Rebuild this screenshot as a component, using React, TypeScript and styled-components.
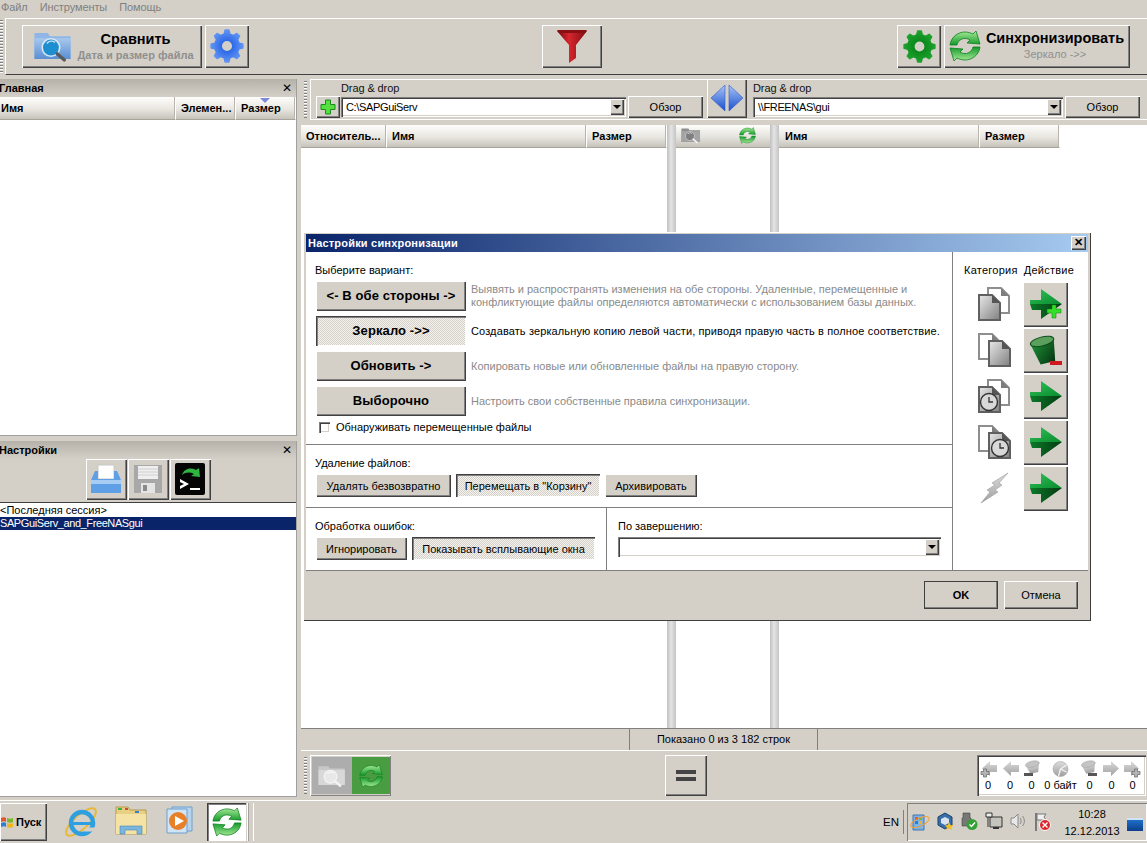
import React from "react"
import styled, { createGlobalStyle, css } from "styled-components"

const GlobalStyle = createGlobalStyle`
    html, body {
        margin: 0;
        padding: 0;
        overflow: hidden;
        background: #d4d0c8;
    }
    body {
        font-family: "Liberation Sans", Arial, sans-serif;
        font-size: 11px;
        color: #000;
    }
    * { box-sizing: border-box; }
`

const raised = css`
    background-color: #d4d0c8;
    box-shadow: inset 1px 1px 0 #fff, inset -1px -1px 0 #404040, inset -2px -2px 0 #808080;
`
const pressed = css`
    background: repeating-conic-gradient(#f4f3f0 0 25%, #d4d0c8 0 50%) 0 0 / 2px 2px;
    box-shadow: inset 1px 1px 0 #404040, inset 2px 2px 0 #808080, inset -1px -1px 0 #fff;
`
const sunken = css`
    background: #fff;
    box-shadow: inset 1px 1px 0 #808080, inset 2px 2px 0 #404040, inset -1px -1px 0 #fff, inset -2px -2px 0 #d4d0c8;
`

/* ---------- icons ---------- */

function gearPath(teeth: number, outer: number, inner: number, hole: number) {
    const c = 16
    const pts: string[] = []
    const step = (Math.PI * 2) / teeth
    for (let i = 0; i < teeth; i++) {
        const a = i * step - Math.PI / 2
        const corners: [number, number][] = [
            [a - step * 0.3, inner],
            [a - step * 0.15, outer],
            [a + step * 0.15, outer],
            [a + step * 0.3, inner],
        ]
        corners.forEach(([t, r]) => {
            pts.push(`${(c + Math.cos(t) * r).toFixed(2)} ${(c + Math.sin(t) * r).toFixed(2)}`)
        })
    }
    const ring = `M${c - hole} ${c}a${hole} ${hole} 0 1 0 ${hole * 2} 0a${hole} ${hole} 0 1 0 ${-hole * 2} 0Z`
    return `M${pts.join("L")}Z${ring}`
}

function Defs() {
    return (
        <HiddenSvg aria-hidden="true">
            <defs>
                <radialGradient id="gBlue" cx="0.5" cy="0.5" r="0.6">
                    <stop offset="0.3" stopColor="#2f6be8" />
                    <stop offset="1" stopColor="#6f9ff5" />
                </radialGradient>
                <radialGradient id="gGreen" cx="0.5" cy="0.5" r="0.6">
                    <stop offset="0.3" stopColor="#0b8a1c" />
                    <stop offset="1" stopColor="#23a832" />
                </radialGradient>
                <linearGradient id="gSync" x1="0" y1="0" x2="0" y2="1">
                    <stop offset="0" stopColor="#a8eb98" />
                    <stop offset="1" stopColor="#12992a" />
                </linearGradient>
                <linearGradient id="gArrowTop" x1="0" y1="0" x2="1" y2="1">
                    <stop offset="0" stopColor="#30c458" />
                    <stop offset="1" stopColor="#0a8a2e" />
                </linearGradient>
                <linearGradient id="gArrowLow" x1="0" y1="0" x2="1" y2="0">
                    <stop offset="0" stopColor="#0b7a28" />
                    <stop offset="1" stopColor="#053a12" />
                </linearGradient>
                <linearGradient id="gTrash" x1="0" y1="0" x2="1" y2="1">
                    <stop offset="0" stopColor="#1e9038" />
                    <stop offset="1" stopColor="#04300e" />
                </linearGradient>
                <linearGradient id="gRed" x1="0" y1="0" x2="1" y2="0">
                    <stop offset="0" stopColor="#6e0a0e" />
                    <stop offset="0.4" stopColor="#d8262e" />
                    <stop offset="1" stopColor="#7e0e12" />
                </linearGradient>
                <linearGradient id="gFolder" x1="0" y1="0" x2="0" y2="1">
                    <stop offset="0" stopColor="#a8c8ee" />
                    <stop offset="1" stopColor="#5a8fd2" />
                </linearGradient>
                <linearGradient id="gDoc" x1="0" y1="0" x2="1" y2="1">
                    <stop offset="0" stopColor="#e8e8e8" />
                    <stop offset="1" stopColor="#808080" />
                </linearGradient>
                <linearGradient id="gGrey" x1="0" y1="0" x2="0" y2="1">
                    <stop offset="0" stopColor="#dcdcdc" />
                    <stop offset="1" stopColor="#a0a0a0" />
                </linearGradient>
                <linearGradient id="gSwap" x1="0" y1="0" x2="0" y2="1">
                    <stop offset="0" stopColor="#a8c4f4" />
                    <stop offset="1" stopColor="#1a4fd0" />
                </linearGradient>
            </defs>
        </HiddenSvg>
    )
}

function Gear({ fill, size }: { fill: string; size: number }) {
    return (
        <svg width={size} height={size} viewBox="0 0 32 32">
            <path d={gearPath(8, 15, 11.5, 5.5)} fill={fill} stroke={fill} strokeWidth="1.500" strokeLinejoin="round" fillRule="evenodd" />
        </svg>
    )
}

function FolderSearch({ muted, dark }: { muted?: boolean; dark?: boolean }) {
    const body = dark ? "#a4a4a4" : muted ? "#d8d8d8" : "url(#gFolder)"
    const back = dark ? "#8e8e8e" : muted ? "#c8c8c8" : "#8fb6e6"
    const lens = dark ? "#7e7e7e" : muted ? "#e8e8e8" : "#1d8fd0"
    const rim = dark ? "#c8c8c8" : muted ? "#f4f4f4" : "#d8e8f4"
    return (
        <svg width="40" height="33" viewBox="0 0 38 32">
            <path d="M1 3h13l2 3h20v22H1z" fill={back} />
            <path d="M1 8h35v20H1z" fill={body} />
            <circle cx="17" cy="17" r="8.500" fill={lens} stroke={rim} strokeWidth="1.600" />
            <path d="M13 13a6 6 0 0 1 8-1" stroke="#fff" strokeOpacity=".7" strokeWidth="1.500" fill="none" />
            <path d="M23 23l7 6" stroke={muted || dark ? "#f2f2f2" : "#5a5a5a"} strokeWidth="3.200" strokeLinecap="round" />
        </svg>
    )
}

function Funnel() {
    return (
        <svg width="32" height="36" viewBox="0 0 32 36">
            <path d="M1 3h30L20 17v13l-7 5V17z" fill="url(#gRed)" />
            <path d="M1 2h30l-2 3H3z" fill="#8a0f14" />
        </svg>
    )
}

function SyncArrows({ size }: { size: number }) {
    const half = "M1 15C2 7 9 2 16 2c3 0 6 1 8 2l3-3 4 13-13-1 3-3c-2-1-3-1.500-5-1.500C12 8.500 9 11 8 15z"
    return (
        <svg width={size} height={size} viewBox="0 0 32 32">
            <path d={half} fill="url(#gSync)" stroke="#0d7f1e" strokeWidth=".8" />
            <path d={half} fill="url(#gSync)" stroke="#0d7f1e" strokeWidth=".8" transform="rotate(180 16 16)" />
        </svg>
    )
}

function PlusIcon() {
    return (
        <svg width="16" height="16" viewBox="0 0 16 16">
            <path d="M5.500 1h5v4.500H15v5h-4.500V15h-5v-4.500H1v-5h4.500z" fill="#55e040" stroke="#1b8a1e" strokeWidth="1" />
        </svg>
    )
}

function SwapIcon() {
    return (
        <svg width="34" height="28" viewBox="0 0 34 28">
            <path d="M15 1v26L1 14z" fill="url(#gSwap)" stroke="#2e58c0" strokeWidth=".6" />
            <path d="M19 1v26l14-13z" fill="url(#gSwap)" stroke="#2e58c0" strokeWidth=".6" />
        </svg>
    )
}

function ActionArrow({ plus }: { plus?: boolean }) {
    return (
        <svg width="34" height="32" viewBox="0 0 34 32">
            <path d="M1 12h11V1l21 15H1z" fill="url(#gArrowTop)" />
            <path d="M1 16h32L12 31V22H3z" fill="url(#gArrowLow)" />
            {plus && <path d="M23 17h4v4h5v4h-5v5h-4v-5h-5v-4h5z" fill="#33e028" stroke="#0f7a12" strokeWidth=".5" />}
        </svg>
    )
}

function TrashAction() {
    return (
        <svg width="34" height="34" viewBox="0 0 34 34">
            <g transform="rotate(-14 16 16)">
                <path d="M3 8h24l-4 22H8z" fill="url(#gTrash)" />
                <ellipse cx="15" cy="8" rx="12" ry="4.500" fill="#5aa05c" stroke="#0d4d18" strokeWidth="1" />
            </g>
            <path d="M21 28h12v4H21z" fill="#d01820" />
        </svg>
    )
}

function Doc({ x, y, solid }: { x: number; y: number; solid?: boolean }) {
    const d = `M${x} ${y}h13l8 8v17h-21z`
    return (
        <g>
            <path d={d} fill={solid ? "url(#gDoc)" : "#fff"} stroke={solid ? "#606060" : "#8e8e8e"} strokeWidth="2" />
            <path d={`M${x + 13} ${y}l8 8h-8z`} fill={solid ? "#555" : "#7e7e7e"} />
        </g>
    )
}

function CategoryDocs({ front, clock }: { front: "left" | "right"; clock?: boolean }) {
    const left = front === "left"
    return (
        <svg width="33" height="34" viewBox="0 0 33 34">
            {left ? (
                <>
                    <Doc x={10} y={1} />
                    <Doc x={1} y={8} solid />
                </>
            ) : (
                <>
                    <Doc x={1} y={1} />
                    <Doc x={11} y={8} solid />
                </>
            )}
            {clock && (
                <g transform={left ? "translate(11 23)" : "translate(22 23)"}>
                    <circle r="8.500" fill="#d8d8d8" stroke="#333" strokeWidth="1.400" />
                    <path d="M0-5v5h4" fill="none" stroke="#333" strokeWidth="1.300" />
                </g>
            )}
        </svg>
    )
}

function Lightning() {
    return (
        <svg width="30" height="32" viewBox="0 0 30 32">
            <path d="M28 1L12 11l3 2-8 5 3 2L1 31l17-11-3-2 7-5-3-2z" fill="url(#gGrey)" stroke="#9a9a9a" strokeWidth=".6" />
        </svg>
    )
}

function OpenConfig() {
    return (
        <svg width="32" height="32" viewBox="0 0 32 32">
            <path d="M8 2h16v14H8z" fill="#fff" stroke="#c8c8c8" />
            <path d="M5 8h3v8h16V8h3l4 9v13H1V17z" fill="#5f9fe6" />
            <path d="M1 17h30v4H1z" fill="#a8cdf4" />
        </svg>
    )
}

function SaveConfig() {
    return (
        <svg width="30" height="30" viewBox="0 0 30 30">
            <path d="M1 1h28v28H1z" fill="#a8a8a8" />
            <path d="M5 2h20v13H5z" fill="#efefef" />
            <path d="M5 5h20M5 8h20M5 11h20" stroke="#cfcfcf" />
            <path d="M8 19h14v10H8z" fill="#e4e4e4" />
            <path d="M10 21h4v6h-4z" fill="#8a8a8a" />
        </svg>
    )
}

function ConsoleIcon() {
    return (
        <svg width="32" height="34" viewBox="0 0 32 34">
            <rect x="1" y="1" width="30" height="32" rx="2" fill="#050505" />
            <path d="M8 13c2-6 8-8 14-5l3-2 1 9-9-1 3-2c-4-2-8-2-12 1z" fill="#2fb53f" />
            <path d="M6 17l9 5-9 5v-3l4-2-4-2zM16 26h10v2H16z" fill="#fff" />
        </svg>
    )
}

function WinFlag() {
    return (
        <svg width="14" height="13" viewBox="0 0 14 13">
            <path d="M1 2c2-1 4-1 5 0v4C5 5 3 5 1 6z" fill="#e2542c" />
            <path d="M7 2c2 1 4 1 6 0v4c-2 1-4 1-6 0z" fill="#7cb82e" />
            <path d="M1 7c2-1 4-1 5 0v4c-1-1-3-1-5 0z" fill="#2d7fd6" />
            <path d="M7 7c2 1 4 1 6 0v4c-2 1-4 1-6 0z" fill="#f0b41e" />
        </svg>
    )
}

function IeLogo() {
    return (
        <svg width="34" height="34" viewBox="0 0 34 34">
            <ellipse cx="17" cy="17" rx="19" ry="7" fill="none" stroke="#e8b83a" strokeWidth="2" transform="rotate(-42 17 17)" />
            <circle cx="18" cy="18" r="11" fill="none" stroke="#2f9fe0" strokeWidth="4.500" />
            <path d="M8 17h20v3H8z" fill="#2f9fe0" />
            <path d="M21 22.500h10v4H21z" fill="#d4d0c8" />
        </svg>
    )
}

function ExplorerIcon() {
    return (
        <svg width="32" height="30" viewBox="0 0 32 30">
            <path d="M1 2h12l2 3h16v24H1z" fill="#e8cf82" stroke="#b89a4a" />
            <path d="M3 3h4v2H3z" fill="#3cae4a" />
            <path d="M10 3h3v2h-3z" fill="#d8483a" />
            <path d="M20 6h4v2h-4z" fill="#3a80d0" />
            <path d="M1 9h30v20H1z" fill="#f4e3a4" />
            <path d="M5 29v-8h22v8h-5v-4H10v4z" fill="#7ab6de" stroke="#4a86ba" strokeWidth=".6" />
        </svg>
    )
}

function MediaIcon() {
    return (
        <svg width="30" height="30" viewBox="0 0 30 30">
            <path d="M6 2h20v24H6z" fill="#b6d4ee" stroke="#6f9fce" />
            <path d="M1 4h20v24H1z" fill="#d0e4f6" stroke="#6f9fce" />
            <circle cx="12" cy="16" r="9" fill="#e8802a" />
            <path d="M9 11l9 5-9 5z" fill="#fff" />
        </svg>
    )
}

const plusMark = (x: number, y: number) => (
    <path d={`M${x + 2.500} ${y}h3v2.500H${x + 8}v3h-2.500V${y + 8}h-3v-2.500H${x}v-3h2.500z`} fill="#b4b4b4" stroke="#666" strokeWidth=".7" />
)
const cylinder = (cx: number, barX: number) => (
    <g>
        <g transform={`rotate(-12 ${cx} 7)`}>
            <path d={`M${cx - 7} 4l3 9h8l3-9z`} fill="url(#gGrey)" />
            <ellipse cx={cx} cy="4" rx="7" ry="3" fill="#c4c4c4" stroke="#a0a0a0" strokeWidth=".5" />
        </g>
        <path d={`M${barX} 13h9v3h-9z`} fill="#555" />
    </g>
)

const statIcons: Record<string, React.ReactElement> = {
    addLeft: <g><path d="M17 5v7H10v4L2 8.500 10 1v4z" fill="url(#gGrey)" />{plusMark(1, 9)}</g>,
    left: <path d="M17 5v7H9v4L1 8.500 9 1v4z" fill="url(#gGrey)" />,
    delLeft: cylinder(10, 1),
    pie: <g><circle cx="8.500" cy="9" r="7.500" fill="url(#gGrey)" stroke="#999" strokeWidth=".5" /><path d="M8.500 9l6-4M8.500 9l6 3M8.500 9l-2 7" stroke="#f4f4f4" strokeWidth="1.300" /></g>,
    delRight: cylinder(8, 7),
    right: <path d="M0 5v7h8v4l8-7.500L8 1v4z" fill="url(#gGrey)" />,
    addRight: <g><path d="M0 5v7h7v4l8-7.500L7 1v4z" fill="url(#gGrey)" />{plusMark(8, 9)}</g>,
}

function StatIcon({ name }: { name: string }) {
    return <svg width="17" height="18" viewBox="0 0 17 18">{statIcons[name]}</svg>
}

function TrayGlyph({ name }: { name: string }) {
    switch (name) {
        case "windows":
            return (
                <svg width="20" height="20" viewBox="0 0 20 20">
                    <path d="M3 3h11v15H3z" fill="#7fb2e4" stroke="#3f76b4" />
                    <path d="M5 5h3v3H5z" fill="#e2542c" /><path d="M9 5h3v3H9z" fill="#7cb82e" />
                    <path d="M5 9h3v3H5z" fill="#2d7fd6" /><path d="M9 9h3v3H9z" fill="#f0b41e" />
                    <ellipse cx="10" cy="10" rx="10" ry="4" fill="none" stroke="#f0a030" transform="rotate(-25 10 10)" />
                </svg>
            )
        case "vbox":
            return (
                <svg width="18" height="18" viewBox="0 0 18 18">
                    <path d="M9 1l7 4v8l-7 4-7-4V5z" fill="#3a6ea8" stroke="#1c3f6e" />
                    <path d="M9 5l4 2v4l-4 2-4-2V7z" fill="#d8e2ee" />
                    <path d="M13 10l1.500 3 3 .4-2.200 2 .6 2.600-2.900-1.400-2.600 1.400.5-2.600-2-2 3-.4z" fill="#f0bc28" />
                </svg>
            )
        case "usb":
            return (
                <svg width="18" height="18" viewBox="0 0 18 18">
                    <path d="M3 1h7v5h1v8H2V6h1z" fill="#777" stroke="#444" strokeWidth=".6" />
                    <circle cx="12" cy="12.500" r="5.500" fill="#35a035" />
                    <path d="M9.500 12.500l2 2 3.500-4" fill="none" stroke="#fff" strokeWidth="1.400" />
                </svg>
            )
        case "network":
            return (
                <svg width="18" height="18" viewBox="0 0 18 18">
                    <path d="M5 5h12v10H5z" fill="#c4c4bc" stroke="#333" />
                    <path d="M1 1h6v4H1zM3 5v10" fill="#eee" stroke="#333" />
                    <path d="M8 15h6v2H8z" fill="#333" />
                </svg>
            )
        case "sound":
            return (
                <svg width="18" height="18" viewBox="0 0 18 18">
                    <path d="M2 6h3l4-4v14l-4-4H2z" fill="#e8e8e8" stroke="#8a8a8a" />
                    <path d="M11 6c1.500 2 1.500 4 0 6M13.500 4c2.500 3 2.500 7 0 10" fill="none" stroke="#8a8a8a" />
                </svg>
            )
        default:
            return (
                <svg width="18" height="20" viewBox="0 0 18 20">
                    <path d="M2 1v18" stroke="#555" strokeWidth="1.400" />
                    <path d="M3 2h9l-2 3 2 3H3z" fill="#f0f0f0" stroke="#777" />
                    <circle cx="11" cy="13" r="5.500" fill="#d8262c" stroke="#fff" />
                    <path d="M8.500 10.500l5 5M13.500 10.500l-5 5" stroke="#fff" strokeWidth="1.400" />
                </svg>
            )
    }
}

/* ---------- data ---------- */

const syncOptions = [
    { label: "<- В обе стороны ->", lines: ["Выявять и распространять изменения на обе стороны. Удаленные, перемещенные и", "конфликтующие файлы определяются автоматически с использованием базы данных."] },
    { label: "Зеркало ->>", lines: ["Создавать зеркальную копию левой части, приводя правую часть в полное соответствие."], active: true },
    { label: "Обновить ->", lines: ["Копировать новые или обновленные файлы на правую сторону."] },
    { label: "Выборочно", lines: ["Настроить свои собственные правила синхронизации."] },
]

const stats = [
    { icon: "addLeft", value: "0" },
    { icon: "left", value: "0" },
    { icon: "delLeft", value: "0" },
    { icon: "pie", value: "0 байт" },
    { icon: "delRight", value: "0" },
    { icon: "right", value: "0" },
    { icon: "addRight", value: "0" },
]

const categoryRows = [
    { cat: <CategoryDocs front="left" />, act: <ActionArrow plus /> },
    { cat: <CategoryDocs front="right" />, act: <TrashAction /> },
    { cat: <CategoryDocs front="left" clock />, act: <ActionArrow /> },
    { cat: <CategoryDocs front="right" clock />, act: <ActionArrow /> },
    { cat: <Lightning />, act: <ActionArrow /> },
]

const trayNames = ["windows", "vbox", "usb", "network", "sound", "flag"]

/* ---------- page ---------- */

export default function App() {
    return (
        <Page>
            <GlobalStyle />
            <Defs />
            <MenuBar>
                <MenuItem>Файл</MenuItem>
                <MenuItem>Инструменты</MenuItem>
                <MenuItem>Помощь</MenuItem>
            </MenuBar>

            <ToolRow>
                <Grip $h={53} />
                <Toolbar>
                    <ToolLeft>
                        <CompareButton>
                            <FolderSearch />
                            <ToolText>
                                <ToolTitle>Сравнить</ToolTitle>
                                <ToolSub>Дата и размер файла</ToolSub>
                            </ToolText>
                        </CompareButton>
                        <ToolButton $w={44}><Gear fill="url(#gBlue)" size={34} /></ToolButton>
                    </ToolLeft>
                    <ToolButton $w={60}><Funnel /></ToolButton>
                    <ToolRight>
                        <ToolButton $w={44}><Gear fill="url(#gGreen)" size={33} /></ToolButton>
                        <SyncButton>
                            <SyncArrows size={32} />
                            <ToolText>
                                <ToolTitle>Синхронизировать</ToolTitle>
                                <SyncSub>Зеркало -&gt;&gt;</SyncSub>
                            </ToolText>
                        </SyncButton>
                    </ToolRight>
                </Toolbar>
            </ToolRow>

            <Workspace>
                <Sidebar>
                    <Pane $h={357}>
                        <PaneHead>Главная<PaneClose>✕</PaneClose></PaneHead>
                        <HeaderRow>
                            <HeadCell $w={176} $pad={1}>Имя</HeadCell>
                            <HeadCell $w={60}>Элемен...</HeadCell>
                            <HeadCell $w={60}>Размер<SortMark /></HeadCell>
                        </HeaderRow>
                        <WhiteFill />
                    </Pane>
                    <Pane $h={356}>
                        <PaneHead>Настройки<PaneClose>✕</PaneClose></PaneHead>
                        <ConfigTools>
                            <ToolButton $w={41} $h={41}><OpenConfig /></ToolButton>
                            <ToolButton $w={41} $h={41}><SaveConfig /></ToolButton>
                            <ToolButton $w={41} $h={41}><ConsoleIcon /></ToolButton>
                        </ConfigTools>
                        <SessionList>
                            <SessionRow>&lt;Последняя сессия&gt;</SessionRow>
                            <SessionRow $selected>SAPGuiServ_and_FreeNASgui</SessionRow>
                        </SessionList>
                    </Pane>
                </Sidebar>

                <Main>
                    <PathBar>
                        <Grip $h={37} />
                        <PathBox>
                            <PlusButton><PlusIcon /></PlusButton>
                            <PathField $w={285}>
                                <DragLabel>Drag &amp; drop</DragLabel>
                                <Combo $h={20}>
                                    <ComboText>C:\SAPGuiServ</ComboText>
                                    <ComboArrow />
                                </Combo>
                            </PathField>
                            <BrowseButton>Обзор</BrowseButton>
                            <SwapButton><SwapIcon /></SwapButton>
                            <PathField $w={310}>
                                <DragLabel>Drag &amp; drop</DragLabel>
                                <Combo $h={20}>
                                    <ComboText>\\FREENAS\gui</ComboText>
                                    <ComboArrow />
                                </Combo>
                            </PathField>
                            <BrowseButton>Обзор</BrowseButton>
                        </PathBox>
                    </PathBar>

                    <Grids>
                        <GridColumn $w={366}>
                            <HeaderRow>
                                <HeadCell $w={86}>Относитель...</HeadCell>
                                <HeadCell $w={200}>Имя</HeadCell>
                                <HeadCell $w={80}>Размер</HeadCell>
                            </HeaderRow>
                        </GridColumn>
                        <Sash />
                        <GridColumn $w={94}>
                            <HeaderRow>
                                <IconCell $w={30}><FolderSearch dark /></IconCell>
                                <IconCell $w={18} />
                                <IconCell $w={46}><SyncArrows size={17} /></IconCell>
                            </HeaderRow>
                        </GridColumn>
                        <Sash />
                        <GridColumn $w={368}>
                            <HeaderRow>
                                <HeadCell $w={201} $pad={6}>Имя</HeadCell>
                                <HeadCell $w={80}>Размер</HeadCell>
                            </HeaderRow>
                        </GridColumn>
                    </Grids>

                    <StatusBar>
                        <StatusCell />
                        <StatusCell>Показано 0 из 3 182 строк</StatusCell>
                        <StatusCell />
                    </StatusBar>

                    <BottomBar>
                        <Grip $h={37} />
                        <ViewBox>
                            <ViewSegment $w={40} $bg="#adadad"><FolderSearch muted /></ViewSegment>
                            <ViewSegment $w={40} $bg="#4a9c40"><SyncArrows size={24} /></ViewSegment>
                        </ViewBox>
                        <EqualButton><EqualMark /><EqualMark /></EqualButton>
                        <StatsBox>
                            {stats.map((s, i) => (
                                <StatCell key={i}>
                                    <StatIcon name={s.icon} />
                                    <StatValue>{s.value}</StatValue>
                                </StatCell>
                            ))}
                        </StatsBox>
                    </BottomBar>
                </Main>
            </Workspace>

            <Taskbar>
                <StartButton><WinFlag />Пуск</StartButton>
                <QuickIcons>
                    <QuickIcon><IeLogo /></QuickIcon>
                    <QuickIcon><ExplorerIcon /></QuickIcon>
                    <QuickIcon><MediaIcon /></QuickIcon>
                </QuickIcons>
                <ActiveApp><SyncArrows size={30} /></ActiveApp>
                <TaskGrip />
                <Lang>EN</Lang>
                <Tray>
                    <TrayIcons>
                        {trayNames.map(n => <TraySlot key={n}><TrayGlyph name={n} /></TraySlot>)}
                    </TrayIcons>
                    <Clock>
                        <span>10:28</span>
                        <span>12.12.2013</span>
                    </Clock>
                    <ShowDesktop />
                </Tray>
            </Taskbar>

            <Dialog>
                <TitleBar>
                    Настройки синхронизации
                    <DialogClose>✕</DialogClose>
                </TitleBar>
                <DialogBody>
                    <DialogLeft>
                        <VariantSection>
                            <SectionLabel>Выберите вариант:</SectionLabel>
                            {syncOptions.map(o => (
                                <OptionRow key={o.label}>
                                    <OptionButton $active={o.active}>{o.label}</OptionButton>
                                    <OptionText $active={o.active}>
                                        {o.lines.map(l => <div key={l}>{l}</div>)}
                                    </OptionText>
                                </OptionRow>
                            ))}
                            <CheckRow>
                                <CheckBox />
                                Обнаруживать перемещенные файлы
                            </CheckRow>
                        </VariantSection>
                        <DeleteSection>
                            <SectionLabel>Удаление файлов:</SectionLabel>
                            <ButtonRow>
                                <SmallButton $w={135}>Удалять безвозвратно</SmallButton>
                                <SmallButton $w={144} $active>Перемещать в "Корзину"</SmallButton>
                                <SmallButton $w={92}>Архивировать</SmallButton>
                            </ButtonRow>
                        </DeleteSection>
                        <BottomSection>
                            <ErrorBlock>
                                <SectionLabel>Обработка ошибок:</SectionLabel>
                                <ButtonRow>
                                    <SmallButton $w={91}>Игнорировать</SmallButton>
                                    <SmallButton $w={183} $active>Показывать всплывающие окна</SmallButton>
                                </ButtonRow>
                            </ErrorBlock>
                            <FinishBlock>
                                <SectionLabel>По завершению:</SectionLabel>
                                <Combo $h={20}>
                                    <ComboText />
                                    <ComboArrow />
                                </Combo>
                            </FinishBlock>
                        </BottomSection>
                    </DialogLeft>
                    <DialogRight>
                        <CategoryHead>
                            <span>Категория</span>
                            <span>Действие</span>
                        </CategoryHead>
                        {categoryRows.map((r, i) => (
                            <CategoryRow key={i}>
                                <CategoryIcon>{r.cat}</CategoryIcon>
                                <ActionButton>{r.act}</ActionButton>
                            </CategoryRow>
                        ))}
                    </DialogRight>
                </DialogBody>
                <DialogFooter>
                    <FooterButton $primary>OK</FooterButton>
                    <FooterButton>Отмена</FooterButton>
                </DialogFooter>
            </Dialog>
        </Page>
    )
}

const HiddenSvg = styled.svg`
    position: absolute;
    width: 0;
    height: 0;
`
const Page = styled.div`
    position: relative;
    width: 1147px;
    height: 843px;
    display: flex;
    flex-direction: column;
    overflow: hidden;
    background: #d4d0c8;
`
const MenuBar = styled.div`
    height: 18px;
    display: flex;
    gap: 12px;
    padding: 1px 0 0 1px;
    color: #808080;
    line-height: 13px;
    letter-spacing: -.1px;
`
const MenuItem = styled.span``
const Grip = styled.div<{ $h: number }>`
    width: 3px;
    height: ${p => p.$h}px;
    flex: none;
    background: repeating-linear-gradient(to bottom, #808080 0 1px, #fff 1px 2px, transparent 2px 3px);
`
const ToolRow = styled.div`
    height: 57px;
    display: flex;
    align-items: center;
    gap: 2px;
`
const Toolbar = styled.div`
    flex: 1;
    height: 57px;
    display: flex;
    align-items: center;
    padding: 0 17px 0 16px;
    border-top: 1px solid #fff;
    border-left: 1px solid #fff;
    border-bottom: 1px solid #404040;
`
const ToolLeft = styled.div`
    width: 520px;
    display: flex;
    gap: 3px;
`
const ToolRight = styled.div`
    margin-left: auto;
    display: flex;
    gap: 3px;
`
const ToolButton = styled.div<{ $w: number; $h?: number }>`
    ${raised}
    width: ${p => p.$w}px;
    height: ${p => p.$h ?? 43}px;
    display: flex;
    align-items: center;
    justify-content: center;
`
const CompareButton = styled.div`
    ${raised}
    width: 180px;
    height: 43px;
    display: flex;
    align-items: center;
    padding: 0 2px 0 11px;
    gap: 3px;
`
const SyncButton = styled.div`
    ${raised}
    width: 186px;
    height: 43px;
    display: flex;
    align-items: center;
    padding-left: 5px;
    gap: 4px;
`
const ToolText = styled.div`
    flex: 1;
    display: flex;
    flex-direction: column;
    align-items: center;
    padding-right: 5px;
`
const ToolTitle = styled.div`
    font-size: 14.500px;
    font-weight: bold;
    line-height: 17px;
    white-space: nowrap;
`
const ToolSub = styled.div`
    font-size: 11px;
    font-weight: bold;
    color: #8f8f8f;
    line-height: 14px;
    white-space: nowrap;
`
const SyncSub = styled.div`
    font-size: 11px;
    color: #8f8f8f;
    line-height: 15px;
    white-space: nowrap;
`
const Workspace = styled.div`
    height: 724px;
    margin-top: 4px;
    display: flex;
`
const Sidebar = styled.div`
    width: 297px;
    flex: none;
    display: flex;
    flex-direction: column;
    gap: 5px;
`
const Pane = styled.div<{ $h: number }>`
    height: ${p => p.$h}px;
    display: flex;
    flex-direction: column;
    border-right: 1px solid #a0a0a0;
    border-bottom: 1px solid #a0a0a0;
`
const PaneHead = styled.div`
    position: relative;
    height: 18px;
    flex: none;
    font-weight: bold;
    line-height: 18px;
    margin-left: -1px;
    padding-right: 4px;
    background: linear-gradient(#b6b2aa, #d4d0c8);
`
const PaneClose = styled.span`
    position: absolute;
    right: 4px;
    top: 0;
    font-size: 12px;
    font-weight: normal;
`
const HeaderRow = styled.div`
    height: 23px;
    flex: none;
    display: flex;
`
const HeadCell = styled.div<{ $w: number; $pad?: number }>`
    position: relative;
    width: ${p => p.$w}px;
    height: 23px;
    padding-left: ${p => p.$pad ?? 5}px;
    font-weight: bold;
    line-height: 22px;
    white-space: nowrap;
    overflow: hidden;
    background: linear-gradient(#fdfdfb, #e8e6e0 55%, #c6c3ba);
    border-bottom: 1px solid #a8a49c;
    border-right: 1px solid #fff;
    box-shadow: inset -1px 0 0 #b8b4ac;
`
const SortMark = styled.span`
    position: absolute;
    top: 1px;
    left: 24px;
    width: 0;
    height: 0;
    border-left: 5px solid transparent;
    border-right: 5px solid transparent;
    border-top: 5px solid #7c88d8;
`
const WhiteFill = styled.div`
    flex: 1;
    background: #fff;
`
const ConfigTools = styled.div`
    height: 43px;
    flex: none;
    display: flex;
    justify-content: center;
    align-items: flex-start;
    gap: 1px;
    background: #d4d0c8;
`
const SessionList = styled.div`
    flex: 1;
    padding-top: 1px;
    background: #fff;
    border-top: 1px solid #404040;
`
const SessionRow = styled.div<{ $selected?: boolean }>`
    height: 13px;
    line-height: 13px;
    white-space: nowrap;
    background: ${p => (p.$selected ? "#0a246a" : "transparent")};
    color: ${p => (p.$selected ? "#fff" : "#000")};
    letter-spacing: ${p => (p.$selected ? "-.4px" : "0")};
`
const Main = styled.div`
    flex: 1;
    margin-left: 4px;
    display: flex;
    flex-direction: column;
    min-width: 0;
`
const PathBar = styled.div`
    height: 41px;
    flex: none;
    display: flex;
    align-items: center;
    gap: 3px;
    padding-left: 3px;
`
const PathBox = styled.div`
    flex: 1;
    height: 41px;
    display: flex;
    align-items: flex-end;
    padding: 0 6px 1px 5px;
    border-top: 1px solid #fff;
    border-left: 1px solid #fff;
    border-bottom: 1px solid #fff;
`
const PlusButton = styled.div`
    ${raised}
    width: 24px;
    height: 22px;
    flex: none;
    margin-right: 1px;
    display: flex;
    align-items: center;
    justify-content: center;
`
const PathField = styled.div<{ $w: number }>`
    width: ${p => p.$w}px;
    flex: none;
    display: flex;
    flex-direction: column;
`
const DragLabel = styled.div`
    height: 18px;
    line-height: 19px;
    color: #111;
    letter-spacing: -.1px;
`
const Combo = styled.div<{ $h: number }>`
    ${sunken}
    height: ${p => p.$h}px;
    margin-bottom: 1px;
    display: flex;
    align-items: center;
    padding: 2px;
`
const ComboText = styled.div`
    flex: 1;
    padding-left: 3px;
    line-height: 16px;
    white-space: nowrap;
    letter-spacing: -.35px;
`
const ComboArrow = styled.div`
    ${raised}
    position: relative;
    width: 14px;
    height: 16px;
    flex: none;
    &::after {
        content: "";
        position: absolute;
        left: 3px;
        top: 6px;
        border-left: 4px solid transparent;
        border-right: 4px solid transparent;
        border-top: 4px solid #000;
    }
`
const BrowseButton = styled.div`
    ${raised}
    width: 75px;
    height: 22px;
    flex: none;
    margin-left: 2px;
    display: flex;
    align-items: center;
    justify-content: center;
`
const SwapButton = styled.div`
    ${raised}
    width: 40px;
    height: 39px;
    flex: none;
    margin: 0 6px 0 4px;
    display: flex;
    align-items: center;
    justify-content: center;
`
const Grids = styled.div`
    height: 603px;
    flex: none;
    margin-top: 5px;
    display: flex;
`
const GridColumn = styled.div<{ $w: number }>`
    width: ${p => p.$w}px;
    flex: none;
    background: #fff;
`
const Sash = styled.div`
    width: 9px;
    flex: none;
    background: linear-gradient(to right, #c0c0c0, #e4e4e4 45%, #c4c4c4);
`
const IconCell = styled.div<{ $w: number }>`
    width: ${p => p.$w}px;
    height: 23px;
    display: flex;
    align-items: center;
    justify-content: center;
    background: linear-gradient(#fdfdfb, #e4e2dc 55%, #c6c3ba);
    border-bottom: 1px solid #a8a49c;
    svg { max-height: 17px; }
`
const StatusBar = styled.div`
    height: 23px;
    flex: none;
    display: grid;
    grid-template-columns: 328px 189px 1fr;
    border-top: 1px solid #808080;
    border-bottom: 1px solid #fff;
`
const StatusCell = styled.div`
    display: flex;
    align-items: center;
    justify-content: center;
    &:nth-child(2) { border-left: 1px solid #808080; border-right: 1px solid #808080; }
`
const BottomBar = styled.div`
    height: 42px;
    margin-top: 4px;
    flex: none;
    display: flex;
    align-items: center;
    padding-left: 3px;
    gap: 3px;
`
const ViewBox = styled.div`
    height: 41px;
    width: 81px;
    flex: none;
    display: flex;
    padding: 2px 1px 2px 2px;
    background: #d4d0c8;
    box-shadow: inset 1px 1px 0 #fff, inset -1px -1px 0 #808080;
`
const ViewSegment = styled.div<{ $w: number; $bg: string }>`
    width: ${p => p.$w}px;
    display: flex;
    align-items: center;
    justify-content: center;
    background: ${p => p.$bg};
    svg { max-height: 24px; }
`
const EqualButton = styled.div`
    ${raised}
    width: 42px;
    height: 41px;
    flex: none;
    margin-left: 271px;
    display: flex;
    flex-direction: column;
    align-items: center;
    justify-content: center;
    gap: 3px;
`
const EqualMark = styled.span`
    width: 20px;
    height: 4px;
    background: #444;
`
const StatsBox = styled.div`
    ${sunken}
    width: 169px;
    height: 41px;
    flex: none;
    margin-left: auto;
    margin-right: 1px;
    display: grid;
    grid-template-columns: 22px 22px 21px 37px 21px 23px 19px;
    padding-top: 5px;
`
const StatCell = styled.div`
    display: flex;
    flex-direction: column;
    align-items: center;
    gap: 1px;
`
const StatValue = styled.span`
    line-height: 13px;
    white-space: nowrap;
`
const Taskbar = styled.div`
    height: 43px;
    margin-top: 1px;
    flex: none;
    display: flex;
    align-items: center;
    border-top: 1px solid #fff;
`
const StartButton = styled.div`
    ${raised}
    width: 47px;
    height: 38px;
    flex: none;
    display: flex;
    align-items: center;
    gap: 2px;
    font-weight: bold;
`
const QuickIcons = styled.div`
    display: flex;
    flex: none;
    margin-left: 9px;
`
const QuickIcon = styled.div`
    width: 50px;
    flex: none;
    display: flex;
    justify-content: center;
`
const ActiveApp = styled.div`
    width: 39px;
    height: 38px;
    flex: none;
    margin-left: 1px;
    background: #fff;
    box-shadow: inset 1px 1px 0 #404040, inset 2px 2px 0 #808080, inset -1px -1px 0 #fff;
    display: flex;
    align-items: center;
    justify-content: center;
`
const TaskGrip = styled.div`
    width: 7px;
    height: 38px;
    flex: none;
    margin-left: 1px;
    border-left: 1px solid #fff;
    border-right: 1px solid #fff;
    box-shadow: inset 1px 0 0 #a0a0a0;
`
const Lang = styled.div`
    margin-left: auto;
    margin-right: 3px;
    width: 24px;
    height: 24px;
    padding-right: 4px;
    text-align: right;
    font-size: 11.500px;
    line-height: 24px;
    border-right: 1px solid #808080;
`
const Tray = styled.div`
    width: 240px;
    height: 38px;
    flex: none;
    display: flex;
    align-items: center;
    padding-left: 1px;
    box-shadow: inset 1px 1px 0 #808080, inset -1px -1px 0 #fff;
`
const TrayIcons = styled.div`
    display: flex;
`
const TraySlot = styled.div`
    width: 24.500px;
    display: flex;
    justify-content: center;
`
const Clock = styled.div`
    width: 70px;
    margin-left: 2px;
    padding-top: 2px;
    display: flex;
    flex-direction: column;
    align-items: center;
    gap: 4px;
    font-size: 11px;
    line-height: 13px;
`
const ShowDesktop = styled.div`
    width: 16px;
    height: 13px;
    margin: 4px 0 0 0;
    flex: none;
    background: linear-gradient(#1f6fc8, #0c3f8c);
    border-top: 2px solid #cfe2f6;
`
const Dialog = styled.div`
    position: absolute;
    left: 303px;
    top: 232px;
    width: 788px;
    height: 389px;
    padding: 2px 3px 3px;
    display: flex;
    flex-direction: column;
    background: #d4d0c8;
    box-shadow: inset 1px 1px 0 #fff, inset -1px -1px 0 #404040;
`
const TitleBar = styled.div`
    position: relative;
    height: 18px;
    flex: none;
    padding-left: 2px;
    font-weight: bold;
    line-height: 18px;
    letter-spacing: .2px;
    color: #fff;
    background: linear-gradient(to right, #0a246a, #a6caf0);
`
const DialogClose = styled.div`
    ${raised}
    position: absolute;
    right: 2px;
    top: 2px;
    width: 15px;
    height: 14px;
    color: #000;
    font-size: 11px;
    font-weight: bold;
    line-height: 13px;
    text-align: center;
`
const DialogBody = styled.div`
    height: 319px;
    flex: none;
    display: flex;
    background: #fff;
    border-bottom: 1px solid #808080;
`
const DialogLeft = styled.div`
    width: 647px;
    flex: none;
    display: flex;
    flex-direction: column;
    border-right: 1px solid #808080;
`
const VariantSection = styled.div`
    height: 193px;
    flex: none;
    padding: 11px 0 0 9px;
    border-bottom: 1px solid #808080;
`
const SectionLabel = styled.div`
    height: 18px;
    line-height: 14px;
    white-space: nowrap;
`
const OptionRow = styled.div`
    height: 30px;
    margin-bottom: 5px;
    display: flex;
    align-items: center;
    gap: 5px;
`
const OptionButton = styled.div<{ $active?: boolean }>`
    ${p => (p.$active ? pressed : raised)}
    width: 150px;
    height: 30px;
    margin-left: 1px;
    padding-bottom: 2px;
    flex: none;
    display: flex;
    align-items: center;
    justify-content: center;
    font-size: 13px;
    font-weight: bold;
    letter-spacing: .1px;
    white-space: nowrap;
`
const OptionText = styled.div<{ $active?: boolean }>`
    color: ${p => (p.$active ? "#000" : "#8a8a8a")};
    letter-spacing: ${p => (p.$active ? ".12px" : "0")};
    line-height: 13px;
    white-space: nowrap;
`
const CheckRow = styled.div`
    height: 16px;
    margin-top: -2px;
    display: flex;
    align-items: center;
    padding-left: 4px;
    gap: 6px;
`
const CheckBox = styled.span`
    ${sunken}
    width: 11px;
    height: 11px;
    flex: none;
`
const DeleteSection = styled.div`
    height: 63px;
    flex: none;
    padding: 11px 0 0 9px;
    border-bottom: 1px solid #808080;
`
const ButtonRow = styled.div`
    display: flex;
    gap: 5px;
    margin-left: 1px;
`
const SmallButton = styled.div<{ $w: number; $active?: boolean }>`
    ${p => (p.$active ? pressed : raised)}
    width: ${p => p.$w}px;
    height: 23px;
    flex: none;
    display: flex;
    align-items: center;
    justify-content: center;
    white-space: nowrap;
`
const BottomSection = styled.div`
    flex: 1;
    display: flex;
`
const ErrorBlock = styled.div`
    width: 301px;
    flex: none;
    padding: 11px 0 0 9px;
    border-right: 1px solid #808080;
`
const FinishBlock = styled.div`
    flex: 1;
    padding: 11px 11px 0 11px;
`
const DialogRight = styled.div`
    flex: 1;
    padding-top: 11px;
    display: flex;
    flex-direction: column;
`
const CategoryHead = styled.div`
    height: 18px;
    line-height: 14px;
    display: flex;
    gap: 6px;
    padding-left: 11px;
    letter-spacing: .25px;
`
const CategoryRow = styled.div`
    height: 46px;
    flex: none;
    display: flex;
    align-items: center;
`
const CategoryIcon = styled.div`
    width: 70px;
    display: flex;
    justify-content: center;
    padding-left: 13px;
`
const ActionButton = styled.div`
    ${raised}
    width: 45px;
    height: 45px;
    flex: none;
    display: flex;
    align-items: center;
    justify-content: center;
`
const DialogFooter = styled.div`
    flex: 1;
    display: flex;
    justify-content: flex-end;
    align-items: flex-start;
    gap: 6px;
    padding: 10px 10px 0 0;
`
const FooterButton = styled.div<{ $primary?: boolean }>`
    ${raised}
    width: 74px;
    height: 28px;
    display: flex;
    align-items: center;
    justify-content: center;
    font-weight: ${p => (p.$primary ? "bold" : "normal")};
    ${p => p.$primary && css`outline: 1px solid #404040; outline-offset: -1px;`}
`
